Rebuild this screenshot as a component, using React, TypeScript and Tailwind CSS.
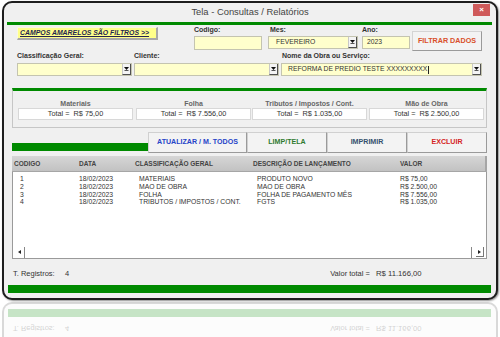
import React from "react";

const rows = [
  ["1", "18/02/2023", "MATERIAIS", "PRODUTO NOVO", "R$ 75,00"],
  ["2", "18/02/2023", "MAO DE OBRA", "MAO DE OBRA", "R$ 2.500,00"],
  ["3", "18/02/2023", "FOLHA", "FOLHA DE PAGAMENTO MÊS", "R$ 7.556,00"],
  ["4", "18/02/2023", "TRIBUTOS / IMPOSTOS / CONT.", "FGTS", "R$ 1.035,00"],
];

function Arrow() {
  return (
    <div className="w-[9px] h-full shrink-0 bg-[#f4f4f4] border-l border-[#c8c8c8] border-r border-b border-r-[#505050] border-b-[#505050] flex items-center justify-center">
      <svg width="5" height="4" viewBox="0 0 5 4">
        <path d="M0 0h5L2.5 3z" fill="#111" />
        <rect x="0.5" y="3.3" width="4" height="0.7" fill="#111" />
      </svg>
    </div>
  );
}

function Field({
  w,
  h,
  text,
  arrow,
  pl,
  caret,
}: {
  w: string;
  h: string;
  text?: string;
  arrow?: boolean;
  pl?: string;
  caret?: boolean;
}) {
  return (
    <div className={`${w} ${h} bg-[#ffffcc] border border-[#c4c4b0] flex items-stretch`}>
      <div className={`flex-1 flex items-center ${pl ?? "pl-[4px]"} text-[6.8px] text-[#333] whitespace-nowrap overflow-hidden`}>
        {text}
        {caret && <span className="inline-block w-[1px] h-[8px] bg-[#222] ml-[1px]" />}
      </div>
      {arrow && <Arrow />}
    </div>
  );
}

function Label({ children, w }: { children: React.ReactNode; w: string }) {
  return (
    <div className={`${w} h-[9px] leading-[9px] text-[7px] font-bold text-[#333] whitespace-nowrap`}>
      {children}
    </div>
  );
}

function Footer() {
  return (
    <div className="flex flex-col">
      <div className="h-[26px] pt-[10px] flex items-start text-[7.5px] leading-[10px] text-[#333]">
        <span className="ml-[9px] w-[52px]">T. Registros:</span>
        <span>4</span>
        <span className="ml-[261px] whitespace-pre">Valor total =  </span>
        <span className="ml-[2px] text-[7.7px]">R$ 11.166,00</span>
      </div>
      <div className="ml-[4px] w-[483px] h-[8px] bg-[#008a00]" />
      <div className="h-[5px]" />
    </div>
  );
}

function Btn({ w, color, children }: { w: string; color: string; children: React.ReactNode }) {
  return (
    <div
      className={`${w} h-[21px] bg-[#f3f3f3] border border-[#d0d0d0] border-r-[#9a9a9a] border-b-[#9a9a9a] flex items-center justify-center text-[7.1px] font-bold ${color}`}
    >
      {children}
    </div>
  );
}

export default function App() {
  const totals = [
    ["Materiais", "R$ 75,00", "ml-[5px]"],
    ["Folha", "R$ 7.556,00", "ml-[3px]"],
    ["Tributos / Impostos / Cont.", "R$ 1.035,00", "ml-[1px]"],
    ["Mão de Obra", "R$ 2.500,00", "ml-[2px]"],
  ];
  return (
    <div className="w-[500px] h-[337px] bg-white overflow-hidden font-['Liberation_Sans',Arial,sans-serif]">
      {/* Window */}
      <div className="ml-[2px] mt-[1px] w-[496px] h-[299px] border-2 border-[#1e1e1e] rounded-[10px] bg-[#f0f0f0] shadow-[1px_1px_2px_rgba(0,0,0,0.45)] flex flex-col overflow-hidden">
        {/* Title bar */}
        <div className="relative h-[19px] flex items-center justify-center text-[9.4px] text-[#444]">
          Tela - Consultas / Relatórios
          <div className="absolute right-[6px] top-[1px] w-[17px] h-[12px] bg-[#cf5a5a] flex items-center justify-center text-white text-[8px] font-bold leading-none">
            ×
          </div>
        </div>
        <div className="ml-[3px] w-[485px] h-[3px] bg-[#008a00]" />

        {/* Row 1 */}
        <div className="flex items-start h-[26px]">
          <div className="ml-[13px] mt-[2px] w-[141px] h-[13px] bg-[#ffff8a] border-r-2 border-b-2 border-[#a8a8a8] border-t border-l border-t-[#f8f8e0] border-l-[#f8f8e0] flex items-center pl-[2px]">
            <span className="text-[6.9px] font-bold italic underline text-[#23234f] whitespace-nowrap">
              CAMPOS AMARELOS SÃO FILTROS &gt;&gt;
            </span>
          </div>
          <div className="ml-[36px] flex flex-col">
            <Label w="w-[68px]">Codigo:</Label>
            <div className="mt-[2px]">
              <Field w="w-[68px]" h="h-[14px]" />
            </div>
          </div>
          <div className="ml-[6px] flex flex-col">
            <Label w="w-[90px]"><span className="pl-[2px]">Mes:</span></Label>
            <div className="mt-[2px]">
              <Field w="w-[90px]" h="h-[13px]" text="FEVEREIRO" arrow pl="pl-[7px]" />
            </div>
          </div>
          <div className="ml-[4px] flex flex-col">
            <Label w="w-[48px]">Ano:</Label>
            <div className="mt-[2px]">
              <Field w="w-[48px]" h="h-[13px]" text="2023" />
            </div>
          </div>
          <div className="ml-[2px] mt-[6px] w-[70px] h-[20px] bg-[#f3f3f3] border border-[#d4d4d4] border-r-[#9a9a9a] border-b-[#9a9a9a] flex items-center justify-center text-[7.2px] font-bold text-[#d9502a]">
            FILTRAR DADOS
          </div>
        </div>

        {/* Row 2 */}
        <div className="flex items-start h-[25px]">
          <div className="ml-[13px] flex flex-col">
            <Label w="w-[115px]">Classificação Geral:</Label>
            <div className="mt-[3px]">
              <Field w="w-[115px]" h="h-[13px]" arrow />
            </div>
          </div>
          <div className="ml-[2px] flex flex-col">
            <Label w="w-[145px]">Cliente:</Label>
            <div className="mt-[3px]">
              <Field w="w-[145px]" h="h-[13px]" arrow />
            </div>
          </div>
          <div className="ml-[2px] flex flex-col">
            <Label w="w-[201px]"><span className="pl-[1px]">Nome da Obra ou Serviço:</span></Label>
            <div className="mt-[3px]">
              <Field
                w="w-[201px]"
                h="h-[13px]"
                text="REFORMA DE PREDIO TESTE XXXXXXXXX"
                arrow
                pl="pl-[6px]"
                caret
              />
            </div>
          </div>
        </div>

        {/* Totals panel */}
        <div className="ml-[8px] mt-[12px] w-[475px] h-[40px] border-t-[3px] border-t-[#008a00] border-x border-b border-[#c6c6c6] flex">
          {totals.map(([label, val, ml]) => (
            <div key={label} className={`${ml} flex flex-col w-[115px]`}>
              <div className="mt-[9px] h-[8px] leading-[8px] text-center text-[7px] font-bold text-[#666] whitespace-nowrap">
                {label}
              </div>
              <div className="h-[12px] bg-white border border-[#d8d8d8] flex items-center justify-center text-[7.3px] text-[#333] whitespace-pre">
                {"Total =  " + val}
              </div>
            </div>
          ))}
        </div>

        {/* Buttons row */}
        <div className="ml-[8px] mt-[4px] flex items-end w-[475px]">
          <div className="w-[136px] h-[8px] mb-[2px] bg-[#008a00]" />
          <Btn w="w-[99px]" color="text-[#2644c8]">ATUALIZAR / M. TODOS</Btn>
          <Btn w="w-[80px]" color="text-[#2f7a2f]">LIMP/TELA</Btn>
          <Btn w="w-[80px]" color="text-[#35506e]">IMPRIMIR</Btn>
          <Btn w="w-[80px]" color="text-[#d42424]">EXCLUIR</Btn>
        </div>

        {/* Table header */}
        <div className="ml-[8px] mt-[3px] w-[475px] h-[16px] bg-gradient-to-b from-[#d6d6d6] to-[#c2c2c2] border-b border-r-2 border-[#a6a6a6] flex items-center pl-[2px] text-[6.5px] font-bold text-[#444] whitespace-nowrap">
          <span className="w-[65px]">CODIGO</span>
          <span className="w-[56px]">DATA</span>
          <span className="w-[118px]">CLASSIFICAÇÃO GERAL</span>
          <span className="w-[147px]">DESCRIÇÃO DE LANÇAMENTO</span>
          <span>VALOR</span>
        </div>

        {/* List box */}
        <div className="ml-[8px] w-[475px] h-[87px] bg-white border-l border-b border-r border-[#9a9a9a] flex flex-col">
          <div className="flex-1 pt-[3px] pl-[7px] text-[6.8px] leading-[7.8px] text-[#333]">
            {rows.map((r) => (
              <div key={r[0]} className="flex whitespace-nowrap">
                <span className="w-[59px]">{r[0]}</span>
                <span className="w-[60px]">{r[1]}</span>
                <span className="w-[118px]">{r[2]}</span>
                <span className="w-[143px]">{r[3]}</span>
                <span>{r[4]}</span>
              </div>
            ))}
          </div>
          <div className="h-[12px] flex items-stretch">
            <div className="ml-[3px] w-[6px] flex items-center justify-center">
              <svg width="3" height="4" viewBox="0 0 3 4">
                <path d="M3 0v4L0 2z" fill="#222" />
              </svg>
            </div>
            <div className="ml-[2px] w-[1px] bg-[#888] mt-[1px]" />
            <div className="flex-1" />
            <div className="w-[1px] bg-[#888] mt-[1px]" />
            <div className="ml-[4px] mr-[2px] mt-[1px] mb-[1px] w-[8px] border-r border-b border-[#777] flex items-center justify-center">
              <svg width="3" height="4" viewBox="0 0 3 4">
                <path d="M0 0v4L3 2z" fill="#222" />
              </svg>
            </div>
          </div>
        </div>

        <Footer />
      </div>

      {/* Reflection */}
      <div className="ml-[2px] mt-[1px] w-[496px] h-[36px] overflow-hidden opacity-[0.22]">
        <div className="-scale-y-100 mt-[1px]">
          <div className="w-[496px] border-2 border-t-0 border-[#555] rounded-b-[10px] bg-[#f6f6f6] overflow-hidden">
            <Footer />
          </div>
        </div>
      </div>
    </div>
  );
}
